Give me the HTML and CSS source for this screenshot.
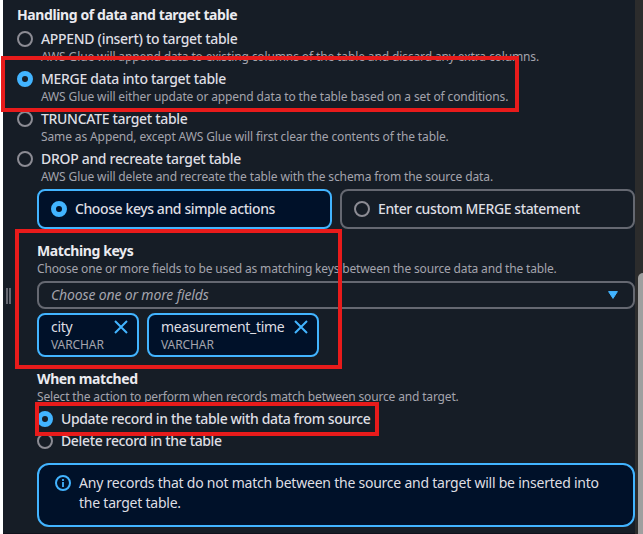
FILE: index.html
```html
<!DOCTYPE html>
<html lang="en">
<head>
<meta charset="utf-8">
<title>Target table settings</title>
<link rel="stylesheet" href="styles.css">
</head>
<body>
<div class="page">
  <main class="panel">
    <h2 class="title">Handling of data and target table</h2>
    <div class="options">
      <div class="option"><i class="radio"></i><div><div class="label">APPEND (insert) to target table</div><div class="desc">AWS Glue will append data to existing columns of the table and discard any extra columns.</div></div></div>
      <div class="option"><i class="radio on"></i><div><div class="label">MERGE data into target table</div><div class="desc">AWS Glue will either update or append data to the table based on a set of conditions.</div></div></div>
      <div class="option"><i class="radio"></i><div><div class="label">TRUNCATE target table</div><div class="desc">Same as Append, except AWS Glue will first clear the contents of the table.</div></div></div>
      <div class="option"><i class="radio"></i><div><div class="label">DROP and recreate target table</div><div class="desc">AWS Glue will delete and recreate the table with the schema from the source data.</div></div></div>
    </div>
    <div class="nested">
      <div class="tiles">
        <div class="tile selected"><i class="radio on"></i><span class="label">Choose keys and simple actions</span></div>
        <div class="tile"><i class="radio"></i><span class="label">Enter custom MERGE statement</span></div>
      </div>
      <section class="keys">
        <h3 class="title">Matching keys</h3>
        <div class="desc">Choose one or more fields to be used as matching keys between the source data and the table.</div>
        <div class="select"><span class="placeholder">Choose one or more fields</span><svg width="10" height="8" viewBox="0 0 10 8"><path d="M.6.6h8.8L5 7.4z" fill="#42b4ff" stroke="#42b4ff" stroke-linejoin="round"/></svg></div>
        <div class="tokens">
          <div class="token"><div><div class="label">city</div><div class="type">VARCHAR</div></div><svg width="14" height="14" viewBox="0 0 14 14"><path d="M1 1l12 12M13 1L1 13" stroke="#42b4ff" stroke-width="2"/></svg></div>
          <div class="token wide"><div><div class="label">measurement_time</div><div class="type">VARCHAR</div></div><svg width="14" height="14" viewBox="0 0 14 14"><path d="M1 1l12 12M13 1L1 13" stroke="#42b4ff" stroke-width="2"/></svg></div>
        </div>
      </section>
      <section class="matched">
        <h3 class="title">When matched</h3>
        <div class="desc">Select the action to perform when records match between source and target.</div>
        <div class="actions">
          <div class="action"><i class="radio on"></i><span class="label">Update record in the table with data from source</span></div>
          <div class="action"><i class="radio"></i><span class="label">Delete record in the table</span></div>
        </div>
      </section>
      <div class="alert">
        <svg width="16" height="16" viewBox="0 0 16 16" fill="none" stroke="#42b4ff"><circle cx="8" cy="8" r="7" stroke-width="2"/><path d="M8 7v5M8 4v2" stroke-width="1.8"/></svg>
        <p>Any records that do not match between the source and target will be inserted into<br>the target table.</p>
      </div>
    </div>
  </main>
  <div class="scrollbar"><div class="thumb"></div></div>
  <div class="handle"></div>
  <div class="mark mark-merge"></div>
  <div class="mark mark-keys"></div>
  <div class="mark mark-update"></div>
</div>
</body>
</html>
```
FILE: styles.css
```css
* { box-sizing: border-box; }
body { margin: 0; background: #fff; font: 500 14px/20px "Noto Sans", sans-serif; color: #dedee3; overflow: hidden; }
.page { position: relative; display: flex; width: 643px; height: 534px; padding-left: 3px; }
.panel { flex: 1; padding: 5px 0 0 14px; background: #161d26; border-bottom: 1px solid #10121c; white-space: nowrap; }
.title { margin: 0; font-size: 14px; font-weight: 700; line-height: 20px; color: #ebebf0; letter-spacing: -.4px; }
.label { letter-spacing: -.31px; line-height: 20px; }
.desc { height: 16px; font-size: 12px; font-weight: 400; line-height: 16px; color: #a4a4ad; letter-spacing: -.16px; }
.radio { display: block; flex: none; width: 16px; height: 16px; border: 2px solid #8c8c94; border-radius: 50%; }
.radio.on { border: 5px solid #42b4ff; }
.options { display: grid; gap: 4px; margin-top: 4px; }
.option { display: flex; gap: 8px; }
.option .radio { margin-top: 2px; }
.option .desc { letter-spacing: -.12px; }
.nested { margin: 4px 0 0 20px; }
.tiles { display: grid; grid-template-columns: 295px 295px; gap: 8px; }
.tile { display: flex; align-items: center; gap: 8px; height: 40px; padding: 0 12px; border: 2px solid #656871; border-radius: 8px; }
.tile.selected { background: #001129; border-color: #42b4ff; }
.tile .label { letter-spacing: -.4px; }
.keys { margin-top: 12px; }
.select { display: flex; align-items: center; justify-content: space-between; height: 28px; margin-top: 4px; padding: 0 15px 0 12px; border: 2px solid #656871; border-radius: 8px; }
.placeholder { font-style: italic; font-weight: 400; color: #a4a4ad; letter-spacing: -.15px; }
.tokens { display: flex; gap: 8px; margin-top: 4px; }
.token { display: flex; justify-content: space-between; width: 102px; height: 44px; padding: 2px 9px 0 12px; border: 2px solid #42b4ff; border-radius: 8px; background: #001129; }
.token.wide { width: 172px; }
.token .label { font-weight: 400; letter-spacing: -.3px; }
.token svg { margin-top: 3px; }
.type { font-size: 12px; font-weight: 400; line-height: 16px; color: #a4a4ad; letter-spacing: -.1px; }
.matched { margin-top: 12px; }
.actions { display: grid; gap: 2px; margin-top: 4px; }
.action { display: flex; align-items: center; gap: 8px; }
.action .label { letter-spacing: -.36px; }
.alert { display: flex; gap: 8px; height: 64px; margin-top: 12px; padding: 8px 16px; border: 2px solid #42b4ff; border-radius: 12px; background: #001129; }
.alert svg { flex: none; margin-top: 2px; }
.alert p { margin: 0; font-weight: 400; letter-spacing: -.23px; }
.scrollbar { width: 8px; padding: 273px 0 0 3px; background: #2c2c2c; }
.thumb { height: 261px; background: #9f9f9f; border-radius: 5px 0 0 0; }
.handle { position: absolute; left: 6px; top: 288px; width: 5px; height: 16px; border: solid #656871; border-width: 0 2px; }
.mark { position: absolute; border: 4px solid #e81b1b; }
.mark-merge { left: 1px; top: 56px; width: 518px; height: 56px; }
.mark-keys { left: 15px; top: 229px; width: 327px; height: 140px; }
.mark-update { left: 35px; top: 402px; width: 344px; height: 34px; }
```
